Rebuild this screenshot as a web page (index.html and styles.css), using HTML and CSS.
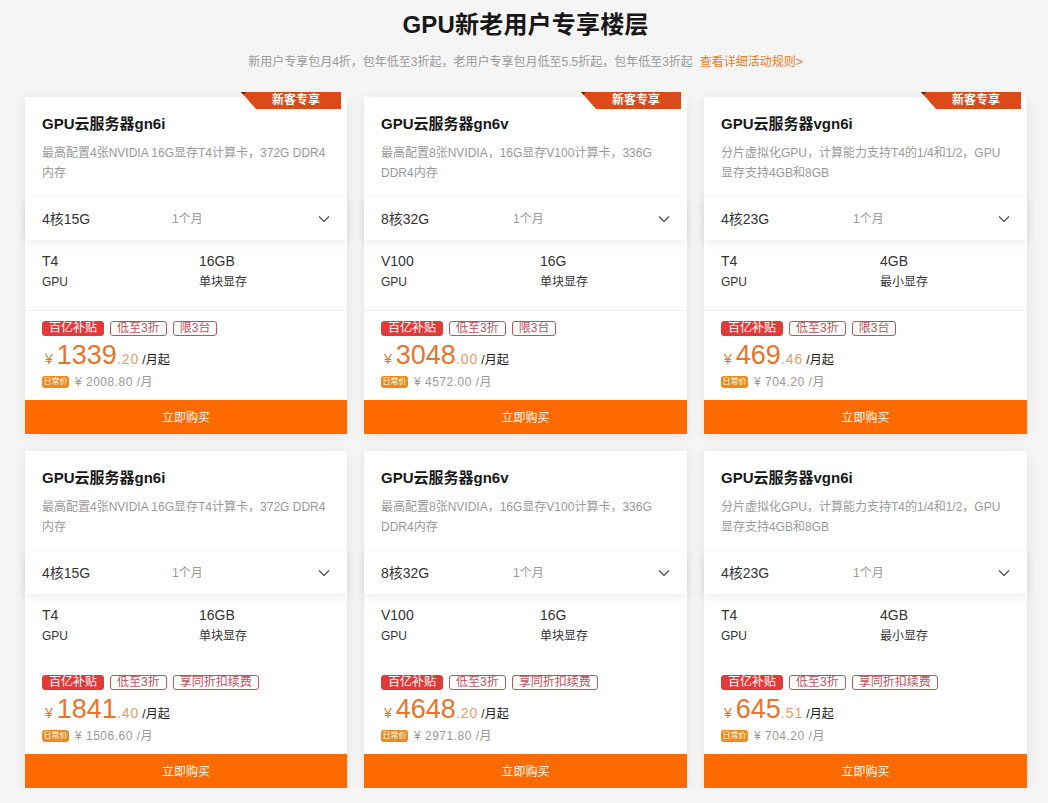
FILE: index.html
```html
<!DOCTYPE html>
<html lang="zh-CN">
<head>
    <meta charset="UTF-8">
    <title>GPU新老用户专享楼层</title>
    <link rel="stylesheet" href="styles.css">
</head>
<body>

    <!-- Header -->
    <div class="header">
        <h1>GPU新老用户专享楼层</h1>
        <p>新用户专享包月4折，包年低至3折起，老用户专享包月低至5.5折起，包年低至3折起<a href="#">查看详细活动规则&gt;</a></p>
    </div>

    <div class="card-grid">

        <!-- Row 1 -->
        <div class="card">
            <div class="ribbon"><span>新客专享</span></div>
            <h2>GPU云服务器gn6i</h2>
            <p class="desc">最高配置4张NVIDIA 16G显存T4计算卡，372G DDR4内存</p>
            <div class="select-row">
                <span class="spec-name">4核15G</span>
                <span class="period">1个月</span>
                <svg class="chevron" viewBox="0 0 12 8"><path d="M1 1.5 6 6.5 11 1.5"/></svg>
            </div>
            <div class="specs">
                <div><b>T4</b><span>GPU</span></div>
                <div><b>16GB</b><span>单块显存</span></div>
            </div>
            <div class="price-box">
                <div class="tags"><span class="tag-fill">百亿补贴</span><span class="tag">低至3折</span><span class="tag">限3台</span></div>
                <div class="price"><i>¥</i><strong>1339</strong><em>.20</em><span>/月起</span></div>
                <div class="old-price"><span class="old-badge">日常价</span>¥ 2008.80 /月</div>
            </div>
            <a class="buy" href="#">立即购买</a>
        </div>

        <div class="card">
            <div class="ribbon"><span>新客专享</span></div>
            <h2>GPU云服务器gn6v</h2>
            <p class="desc">最高配置8张NVIDIA，16G显存V100计算卡，336G DDR4内存</p>
            <div class="select-row">
                <span class="spec-name">8核32G</span>
                <span class="period">1个月</span>
                <svg class="chevron" viewBox="0 0 12 8"><path d="M1 1.5 6 6.5 11 1.5"/></svg>
            </div>
            <div class="specs">
                <div><b>V100</b><span>GPU</span></div>
                <div><b>16G</b><span>单块显存</span></div>
            </div>
            <div class="price-box">
                <div class="tags"><span class="tag-fill">百亿补贴</span><span class="tag">低至3折</span><span class="tag">限3台</span></div>
                <div class="price"><i>¥</i><strong>3048</strong><em>.00</em><span>/月起</span></div>
                <div class="old-price"><span class="old-badge">日常价</span>¥ 4572.00 /月</div>
            </div>
            <a class="buy" href="#">立即购买</a>
        </div>

        <div class="card">
            <div class="ribbon"><span>新客专享</span></div>
            <h2>GPU云服务器vgn6i</h2>
            <p class="desc">分片虚拟化GPU，计算能力支持T4的1/4和1/2，GPU显存支持4GB和8GB</p>
            <div class="select-row">
                <span class="spec-name">4核23G</span>
                <span class="period">1个月</span>
                <svg class="chevron" viewBox="0 0 12 8"><path d="M1 1.5 6 6.5 11 1.5"/></svg>
            </div>
            <div class="specs">
                <div><b>T4</b><span>GPU</span></div>
                <div><b>4GB</b><span>最小显存</span></div>
            </div>
            <div class="price-box">
                <div class="tags"><span class="tag-fill">百亿补贴</span><span class="tag">低至3折</span><span class="tag">限3台</span></div>
                <div class="price"><i>¥</i><strong>469</strong><em>.46</em><span>/月起</span></div>
                <div class="old-price"><span class="old-badge">日常价</span>¥ 704.20 /月</div>
            </div>
            <a class="buy" href="#">立即购买</a>
        </div>

        <!-- Row 2 -->
        <div class="card">
            <h2>GPU云服务器gn6i</h2>
            <p class="desc">最高配置4张NVIDIA 16G显存T4计算卡，372G DDR4内存</p>
            <div class="select-row">
                <span class="spec-name">4核15G</span>
                <span class="period">1个月</span>
                <svg class="chevron" viewBox="0 0 12 8"><path d="M1 1.5 6 6.5 11 1.5"/></svg>
            </div>
            <div class="specs">
                <div><b>T4</b><span>GPU</span></div>
                <div><b>16GB</b><span>单块显存</span></div>
            </div>
            <div class="price-box no-line">
                <div class="tags"><span class="tag-fill">百亿补贴</span><span class="tag">低至3折</span><span class="tag">享同折扣续费</span></div>
                <div class="price"><i>¥</i><strong>1841</strong><em>.40</em><span>/月起</span></div>
                <div class="old-price"><span class="old-badge">日常价</span>¥ 1506.60 /月</div>
            </div>
            <a class="buy" href="#">立即购买</a>
        </div>

        <div class="card">
            <h2>GPU云服务器gn6v</h2>
            <p class="desc">最高配置8张NVIDIA，16G显存V100计算卡，336G DDR4内存</p>
            <div class="select-row">
                <span class="spec-name">8核32G</span>
                <span class="period">1个月</span>
                <svg class="chevron" viewBox="0 0 12 8"><path d="M1 1.5 6 6.5 11 1.5"/></svg>
            </div>
            <div class="specs">
                <div><b>V100</b><span>GPU</span></div>
                <div><b>16G</b><span>单块显存</span></div>
            </div>
            <div class="price-box no-line">
                <div class="tags"><span class="tag-fill">百亿补贴</span><span class="tag">低至3折</span><span class="tag">享同折扣续费</span></div>
                <div class="price"><i>¥</i><strong>4648</strong><em>.20</em><span>/月起</span></div>
                <div class="old-price"><span class="old-badge">日常价</span>¥ 2971.80 /月</div>
            </div>
            <a class="buy" href="#">立即购买</a>
        </div>

        <div class="card">
            <h2>GPU云服务器vgn6i</h2>
            <p class="desc">分片虚拟化GPU，计算能力支持T4的1/4和1/2，GPU显存支持4GB和8GB</p>
            <div class="select-row">
                <span class="spec-name">4核23G</span>
                <span class="period">1个月</span>
                <svg class="chevron" viewBox="0 0 12 8"><path d="M1 1.5 6 6.5 11 1.5"/></svg>
            </div>
            <div class="specs">
                <div><b>T4</b><span>GPU</span></div>
                <div><b>4GB</b><span>最小显存</span></div>
            </div>
            <div class="price-box no-line">
                <div class="tags"><span class="tag-fill">百亿补贴</span><span class="tag">低至3折</span><span class="tag">享同折扣续费</span></div>
                <div class="price"><i>¥</i><strong>645</strong><em>.51</em><span>/月起</span></div>
                <div class="old-price"><span class="old-badge">日常价</span>¥ 704.20 /月</div>
            </div>
            <a class="buy" href="#">立即购买</a>
        </div>

    </div>

</body>
</html>
```

FILE: styles.css
```css
body {
    margin: 0;
    background-color: #f5f5f5;
    color: #181818;
    font-family: "Liberation Sans", "Noto Sans CJK SC", sans-serif;
    overflow: hidden;
}

/* Header */
.header {
    text-align: center;
    height: 97px;
    padding-left: 3px;
    box-sizing: border-box;
}
.header h1 {
    margin: 0;
    padding-top: 9px;
    font-size: 24px;
    line-height: 32px;
    font-weight: 700;
    letter-spacing: 0.2px;
}
.header p {
    margin: 13px 0 0;
    font-size: 12px;
    line-height: 16px;
    color: #999;
}
.header a {
    margin-left: 7px;
    color: #ee7a24;
    text-decoration: none;
}

/* Cards */
.card-grid {
    display: grid;
    grid-template-columns: 322px 323px 323px;
    gap: 17px;
    padding-left: 25px;
}
.card {
    position: relative;
    height: 337px;
    background-color: #fff;
    box-shadow: 0 2px 12px rgba(0, 0, 0, 0.08);
    display: flex;
    flex-direction: column;
}
.card h2 {
    margin: 0;
    padding: 17px 17px 0;
    font-size: 15px;
    line-height: 20px;
    font-weight: 700;
}
.desc {
    margin: 9px 0 0;
    padding: 0 17px;
    height: 40px;
    font-size: 12px;
    line-height: 20px;
    color: #999;
}

/* Ribbon */
.ribbon {
    position: absolute;
    top: -5px;
    right: 6px;
    width: 100px;
    height: 17px;
    background-color: #dc4a1a;
    clip-path: polygon(0 0, 100% 0, 100% 100%, 15% 100%);
    text-align: right;
}
.ribbon::before {
    content: "";
    position: absolute;
    left: 0;
    top: 0;
    border-top: 5px solid #5b2412;
    border-right: 5px solid transparent;
}
.ribbon span {
    display: block;
    padding-right: 21px;
    font-size: 12px;
    line-height: 16px;
    font-weight: 700;
    color: #fff;
}

/* Config select */
.select-row {
    display: flex;
    align-items: center;
    box-sizing: border-box;
    height: 42px;
    margin-top: 15px;
    padding: 0 17px 3px;
    background-color: #fff;
    box-shadow: 0 2px 10px rgba(0, 0, 0, 0.09);
    font-size: 14px;
    color: #333;
    flex-shrink: 0;
}
.spec-name {
    width: 130px;
}
.card:nth-child(3n+2) .spec-name,
.card:nth-child(3n) .spec-name {
    width: 132px;
}
.period {
    flex: 1;
    font-size: 12px;
    color: #999;
}
.chevron {
    width: 12px;
    height: 8px;
    margin-top: 3px;
    fill: none;
    stroke: #444;
    stroke-width: 1.1;
}

/* Specs */
.specs {
    display: grid;
    grid-template-columns: 157px 1fr;
    padding: 12px 17px 0;
    height: 58px;
}
.card:nth-child(3n+2) .specs,
.card:nth-child(3n) .specs {
    grid-template-columns: 159px 1fr;
}
.specs div {
    display: flex;
    flex-direction: column;
}
.specs b {
    font-weight: 400;
    font-size: 14px;
    line-height: 18px;
    color: #333;
}
.specs span {
    margin-top: 3px;
    font-size: 12px;
    line-height: 18px;
    color: #333;
}

/* Price */
.price-box {
    flex: 1;
    padding: 10px 17px 0;
    border-top: 1px solid #eee;
}
.price-box.no-line {
    border-top-color: #fff;
}
.tags {
    display: flex;
    gap: 6px;
    height: 15px;
}
.tags span {
    box-sizing: border-box;
    height: 15px;
    padding: 0 6px;
    border: 1px solid #c8505a;
    border-radius: 3px;
    font-size: 12px;
    line-height: 13px;
    color: #c0505a;
}
.tags .tag-fill {
    background-color: #e23a3a;
    border-color: #e23a3a;
    color: #fff;
}
.price {
    display: flex;
    align-items: baseline;
    margin-top: 4px;
    height: 30px;
    line-height: 30px;
    color: #e8742c;
}
.price i {
    margin: 0 4px 0 3px;
    font-style: normal;
    font-size: 14px;
}
.price strong {
    font-size: 27px;
    font-weight: 400;
}
.price em {
    font-style: normal;
    font-size: 14px;
    letter-spacing: 1px;
    color: #eb9a68;
}
.price span {
    margin-left: 3px;
    font-size: 12px;
    color: #181818;
}
.old-price {
    display: flex;
    align-items: center;
    height: 16px;
    margin-top: 2px;
    font-size: 12px;
    letter-spacing: 0.5px;
    color: #999;
}
.old-badge {
    width: 27px;
    height: 12px;
    margin: 3px 6px 0 0;
    border-radius: 3px;
    background-color: #f08a1c;
    color: #fff;
    font-size: 8px;
    line-height: 12px;
    letter-spacing: 0;
    text-align: center;
    flex-shrink: 0;
}

/* Buy button */
.buy {
    display: block;
    box-sizing: border-box;
    height: 34px;
    padding-top: 1px;
    line-height: 34px;
    background-color: #ff6a00;
    color: #fff;
    font-size: 12px;
    text-align: center;
    text-decoration: none;
    flex-shrink: 0;
}
```
